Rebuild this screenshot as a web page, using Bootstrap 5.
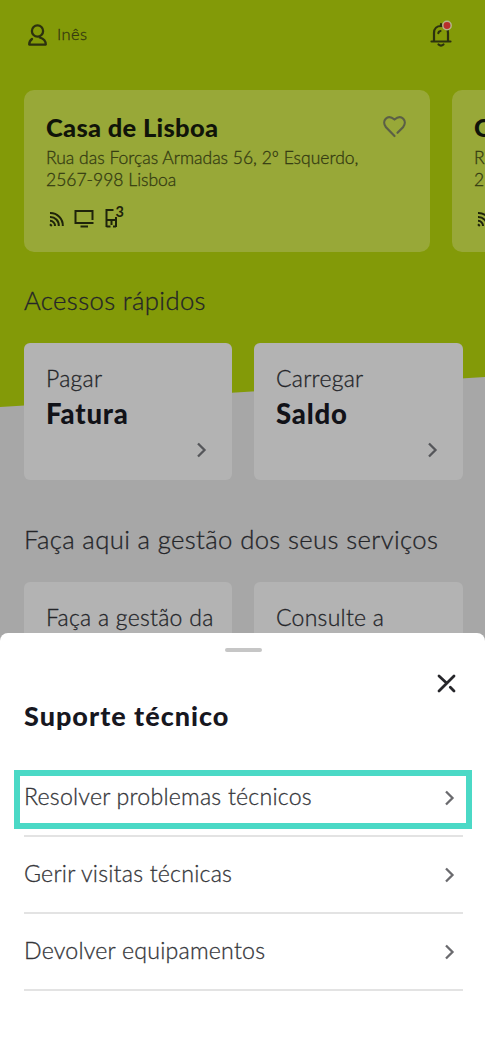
<!DOCTYPE html>
<html lang="pt">
<head>
<meta charset="utf-8">
<meta name="viewport" content="width=device-width, initial-scale=1">
<title>Suporte técnico</title>
<link href="https://cdn.jsdelivr.net/npm/bootstrap@5.3.0/dist/css/bootstrap.min.css" rel="stylesheet">
<style>
body{font-family:"Lato","Open Sans",sans-serif;font-weight:300;background:#a7a7a7;color:#242529}
.screen{height:1045px;background:#a7a7a7}
.backdrop-green{height:407px;background:#839a08;clip-path:polygon(0 0,100% 0,100% 377px,0 407px)}
svg{display:block;flex:none;overflow:visible}
.user-name,.home-address,.section-title,.tile-label,.option{-webkit-text-stroke:.3px currentColor}
.topbar{height:90px;padding:0 33px 21px 27px;color:#34390f}
.user-name{font-size:16.5px;letter-spacing:.4px}
.homes{gap:22px;padding-left:24px}
.home-card{width:406px;height:162px;flex:none;border-radius:10px;background:#98a838;padding:22px 22px 0}
.home-title{font-size:25.5px;line-height:30px;font-weight:900;color:#101409;letter-spacing:.3px}
.home-address{font-size:17.5px;line-height:22px;margin-top:5px;color:#343b12;white-space:nowrap}
.home-icons{margin-top:15px;gap:10px;height:22px;color:#1e230a}
.line-count{left:11.5px;top:-2px;font-size:14.5px;line-height:15px;font-weight:700}
.section-title{font-size:25.7px;line-height:30px;font-weight:300;margin:0;padding-left:24px;white-space:nowrap;letter-spacing:.37px}
.tiles{gap:22px;padding:0 22px 0 24px}
.tile{width:209px;flex:none;height:137px;border-radius:6px;background:#b3b3b3;padding:20px 22px 0}
.tile:first-child{width:208px}
.tile-label{font-size:23px;line-height:30px;white-space:nowrap;letter-spacing:.27px}
.tile-name{font-size:27.5px;line-height:34px;margin-top:4px;font-weight:900;color:#111218;letter-spacing:.8px}
.chev{stroke:#55565a}
.sheet{height:412px;background:#fff;border-radius:8px 8px 0 0;padding:0 22px 0 24px}
.grip{width:37px;height:4px;border-radius:2px;background:#c6c6c6;margin:15px auto 0}
.sheet-title{font-size:27px;line-height:30px;font-weight:900;margin:8px 0 0;color:#17171f;letter-spacing:1px}
.options{margin-top:29px}
.option{height:77px;border-bottom:2px solid #e3e3e3;padding:21px 9px 0 0;font-size:23.200px;line-height:30px;color:#35363a;white-space:nowrap;letter-spacing:.2px}
.option .chev{margin-top:10px;stroke:#6a6a6e}
.focus-frame{top:10px;left:-10px;width:458px;height:59px;border:6px solid #4bd9c6}
</style>
</head>
<body>
<main class="screen position-relative overflow-hidden">
  <div class="backdrop-green position-absolute top-0 start-0 w-100"></div>
  <div class="position-relative">
    <header class="topbar d-flex align-items-center justify-content-between">
      <div class="d-flex align-items-center" style="gap:9px">
        <svg width="21" height="22" viewBox="0 0 21 22" fill="none" stroke="#2c310f" stroke-width="2.3" stroke-linecap="round" stroke-linejoin="round"><circle cx="10.5" cy="7" r="5.600"/><path d="M5 15C3 16.500 2.200 18 2.200 20.600H18.800C18.800 17 17.500 14.800 12.800 13.500"/></svg>
        <span class="user-name">Inês</span>
      </div>
      <svg width="22" height="27" viewBox="0 0 22 27" fill="none" stroke="#2c310f" stroke-width="2.2" stroke-linecap="round"><path d="M1.500 20.500H20.500M4 20V12C4 7.500 7 5 11 5S18 7.500 18 12V20M11 3V5M10.500 10C9 10.300 8.400 11 8.300 12.200M8.500 23.500Q11 25.700 13.500 23.500"/><circle cx="17" cy="4.500" r="4.200" fill="#b92e2c" stroke="#b5b38c" stroke-width="1.500"/></svg>
    </header>

    <section class="homes d-flex">
      <article class="home-card">
        <div class="d-flex justify-content-between">
          <div class="home-title">Casa de Lisboa</div>
          <svg width="26" height="24" viewBox="0 0 26 24" fill="none" stroke="#5b5f46" stroke-width="2.200" stroke-linecap="round" stroke-linejoin="round" style="margin-top:2px"><path d="M12.500 22 4 13.200C-1 7 5.500-.5 12.500 5.500C19.500-.5 26 7 21 13.200L15.500 18.800"/></svg>
        </div>
        <div class="home-address">Rua das Forças Armadas 56, 2º Esquerdo,<br>2567-998 Lisboa</div>
        <div class="home-icons d-flex align-items-end">
          <svg width="18" height="20" viewBox="0 0 18 20" fill="none" stroke="currentColor" stroke-width="2"><path d="M4 5A12.500 12.500 0 0 1 16.800 18M4 9A8.500 8.500 0 0 1 12.800 18M4 12.800A5 5 0 0 1 9 18M4 16.300L5.800 18"/></svg>
          <svg width="20" height="20" viewBox="0 0 20 20" fill="none" stroke="currentColor" stroke-width="2"><path d="M18.500 12V3H1.500V15H19.500M6.500 18.500H14"/></svg>
          <div class="position-relative">
            <svg width="20" height="22" viewBox="0 0 20 22" fill="none" stroke="currentColor" stroke-width="2"><path d="M9.500 4H2.500V21M2.500 14H12V11M12 13V21M2.500 20.500H6.500M9 20.500H12M7.500 14V19"/></svg>
            <span class="line-count position-absolute">3</span>
          </div>
        </div>
      </article>
      <article class="home-card">
        <div class="home-title">C</div>
        <div class="home-address">R<br>25</div>
        <div class="home-icons d-flex align-items-end">
          <svg width="18" height="20" viewBox="0 0 18 20" fill="none" stroke="currentColor" stroke-width="2"><path d="M4 5A12.500 12.500 0 0 1 16.800 18M4 9A8.500 8.500 0 0 1 12.800 18M4 12.800A5 5 0 0 1 9 18M4 16.300L5.800 18"/></svg>
        </div>
      </article>
    </section>

    <h2 class="section-title" style="margin-top:33px">Acessos rápidos</h2>
    <section class="tiles d-flex" style="margin-top:28px">
      <div class="tile">
        <div class="tile-label">Pagar</div>
        <div class="tile-name">Fatura</div>
        <svg class="chev ms-auto me-1" style="margin-top:12px" width="9" height="14" viewBox="0 0 9 14" fill="none" stroke-width="2.300"><path d="M1 .5 7.500 7 1 13.500"/></svg>
      </div>
      <div class="tile">
        <div class="tile-label">Carregar</div>
        <div class="tile-name">Saldo</div>
        <svg class="chev ms-auto me-1" style="margin-top:12px" width="9" height="14" viewBox="0 0 9 14" fill="none" stroke-width="2.300"><path d="M1 .5 7.500 7 1 13.500"/></svg>
      </div>
    </section>

    <h2 class="section-title" style="margin-top:44px">Faça aqui a gestão dos seus serviços</h2>
    <section class="tiles d-flex" style="margin-top:28px">
      <div class="tile"><div class="tile-label">Faça a gestão da</div></div>
      <div class="tile"><div class="tile-label">Consulte a</div></div>
    </section>
  </div>

  <section class="sheet position-absolute bottom-0 start-0 w-100 overflow-hidden">
    <div class="grip"></div>
    <svg class="ms-auto" style="margin-top:22px;margin-right:7px" width="19" height="19" viewBox="0 0 19 19" fill="none" stroke="#27272b" stroke-width="2.800" stroke-linecap="round"><path d="M2 2 9.500 9M2 17 17 2M13.300 13.300 17 17"/></svg>
    <h1 class="sheet-title">Suporte técnico</h1>
    <div class="options position-relative">
      <div class="option d-flex justify-content-between"><span>Resolver problemas técnicos</span><svg class="chev" width="9" height="14" viewBox="0 0 9 14" fill="none" stroke-width="2.300"><path d="M1 .5 7.500 7 1 13.500"/></svg></div>
      <div class="option d-flex justify-content-between"><span>Gerir visitas técnicas</span><svg class="chev" width="9" height="14" viewBox="0 0 9 14" fill="none" stroke-width="2.300"><path d="M1 .5 7.500 7 1 13.500"/></svg></div>
      <div class="option d-flex justify-content-between"><span>Devolver equipamentos</span><svg class="chev" width="9" height="14" viewBox="0 0 9 14" fill="none" stroke-width="2.300"><path d="M1 .5 7.500 7 1 13.500"/></svg></div>
      <div class="focus-frame position-absolute"></div>
    </div>
  </section>
</main>
<script src="https://cdn.jsdelivr.net/npm/bootstrap@5.3.0/dist/js/bootstrap.bundle.min.js"></script>
</body>
</html>
